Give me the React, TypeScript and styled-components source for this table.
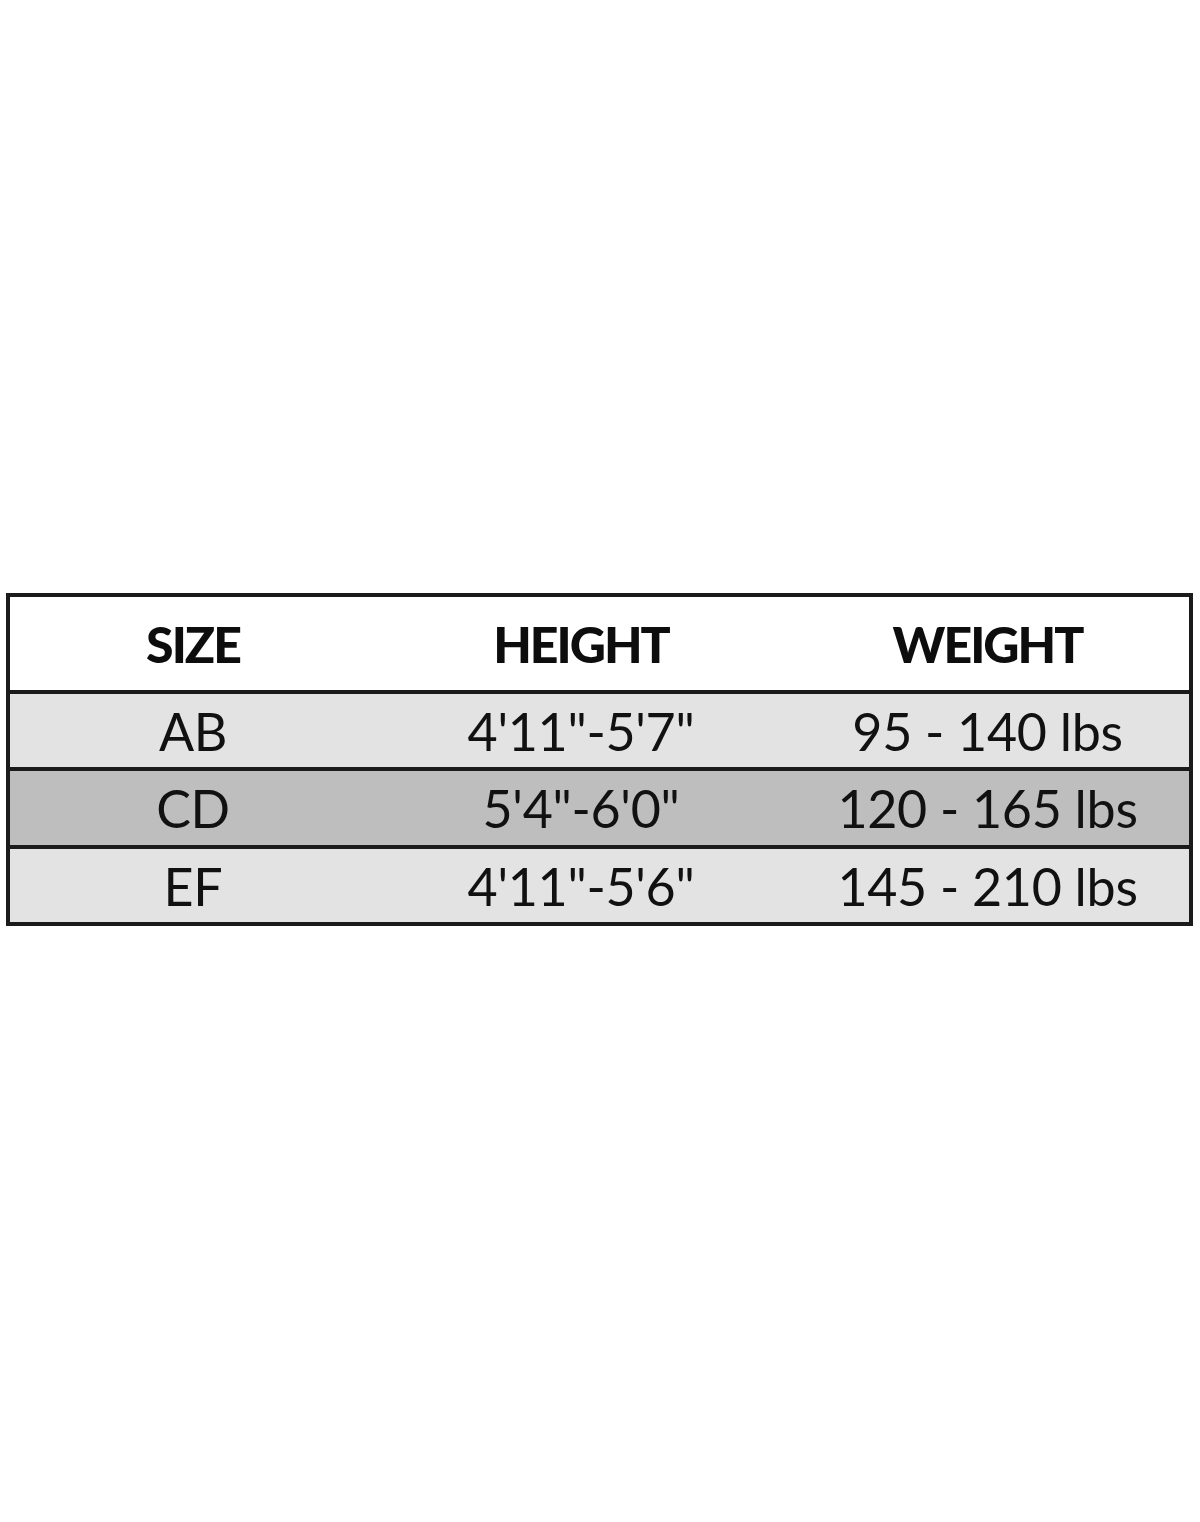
import React from "react";
import styled, { createGlobalStyle } from "styled-components";

const Global = createGlobalStyle`
  html, body { margin: 0; padding: 0; background: #ffffff; }
  body { font-family: "Lato", "Liberation Sans", sans-serif; }
`;

const Page = styled.div`
  height: 1522px;
  box-sizing: border-box;
  padding: 593px 7px 0 6px;
  background: #ffffff;
`;

const Table = styled.div`
  border: 4px solid #1b1b1b;
  display: flex;
  flex-direction: column;
`;

const Row = styled.div<{ $bg: string; $h: number; $first?: boolean }>`
  display: grid;
  grid-template-columns: 366px 410px 1fr;
  align-items: center;
  height: ${(p) => p.$h}px;
  background: ${(p) => p.$bg};
  border-top: ${(p) => (p.$first ? "none" : "4px solid #1b1b1b")};
`;

const HeadCell = styled.div`
  text-align: center;
  font-family: "Lato", "Liberation Sans", sans-serif;
  font-weight: 900;
  font-size: 50px;
  color: #0d0d0d;
  letter-spacing: -2px;
  line-height: 1;
`;

const Cell = styled.div`
  text-align: center;
  font-family: "Lato", "Liberation Sans", sans-serif;
  font-weight: 400;
  font-size: 52px;
  color: #111111;
  letter-spacing: -0.3px;
  line-height: 1;
`;

const rows = [
  { size: "AB", height: `4'11"-5'7"`, weight: "95 - 140 lbs", bg: "#e3e3e3", h: 73 },
  { size: "CD", height: `5'4"-6'0"`, weight: "120 - 165 lbs", bg: "#bebebe", h: 74 },
  { size: "EF", height: `4'11"-5'6"`, weight: "145 - 210 lbs", bg: "#e3e3e3", h: 73 },
];

export default function App() {
  return (
    <>
      <Global />
      <Page>
        <Table>
          <Row $bg="#ffffff" $h={93} $first>
            <HeadCell>SIZE</HeadCell>
            <HeadCell>HEIGHT</HeadCell>
            <HeadCell>WEIGHT</HeadCell>
          </Row>
          {rows.map((r) => (
            <Row key={r.size} $bg={r.bg} $h={r.h}>
              <Cell>{r.size}</Cell>
              <Cell>{r.height}</Cell>
              <Cell>{r.weight}</Cell>
            </Row>
          ))}
        </Table>
      </Page>
    </>
  );
}
